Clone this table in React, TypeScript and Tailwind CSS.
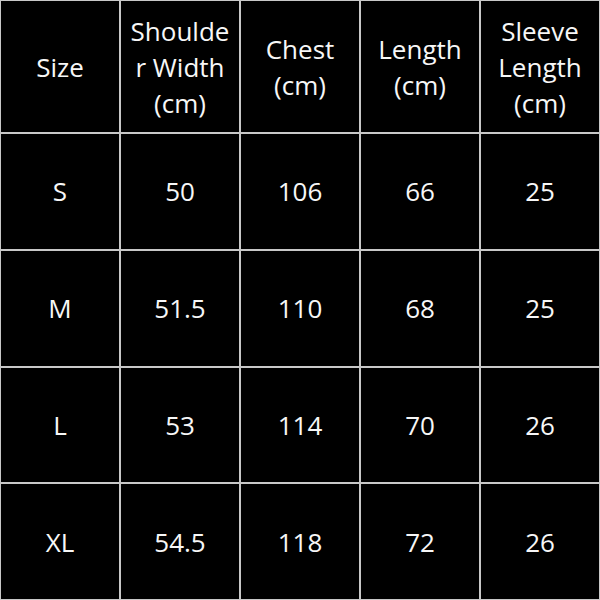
import React from "react";

const header = ["Size", "Shoulder Width (cm)", "Chest (cm)", "Length (cm)", "Sleeve Length (cm)"];
const rows = [
  ["S", "50", "106", "66", "25"],
  ["M", "51.5", "110", "68", "25"],
  ["L", "53", "114", "70", "26"],
  ["XL", "54.5", "118", "72", "26"],
];

export default function App() {
  return (
    <div
      className="w-[600px] h-[600px] bg-[#c8c8c8] p-[1px] grid grid-cols-5 grid-rows-[131px_1fr_1fr_1fr_1fr] gap-[2px] text-[26px] leading-[36px] text-[#f7f7f7]"
      style={{ fontFamily: '"Open Sans", "Noto Sans", sans-serif' }}
    >
      {header.map((h) => (
        <div key={h} className="bg-black flex items-center justify-center px-2 text-center break-words">
          <span className="w-full break-words">{h}</span>
        </div>
      ))}
      {rows.map((r, i) =>
        r.map((c, j) => (
          <div key={`${i}-${j}`} className="bg-black flex items-center justify-center text-center">
            {c}
          </div>
        ))
      )}
    </div>
  );
}
